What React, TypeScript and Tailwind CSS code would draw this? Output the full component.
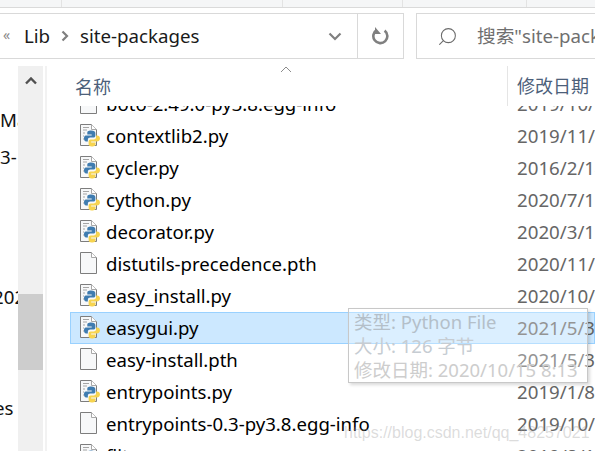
import { Search } from "lucide-react";

const FONT = "font-['Noto_Sans','Noto_Sans_CJK_SC',sans-serif]";

const FILES = [
  { name: "boto-2.49.0-py3.8.egg-info", date: "2019/10/15", py: false },
  { name: "contextlib2.py", date: "2019/11/15", py: true },
  { name: "cycler.py", date: "2016/2/14", py: true },
  { name: "cython.py", date: "2020/7/15", py: true },
  { name: "decorator.py", date: "2020/3/15", py: true },
  { name: "distutils-precedence.pth", date: "2020/11/15", py: false },
  { name: "easy_install.py", date: "2020/10/15", py: true },
  { name: "easygui.py", date: "2021/5/30", py: true, selected: true },
  { name: "easy-install.pth", date: "2021/5/30", py: false },
  { name: "entrypoints.py", date: "2019/1/8", py: true },
  { name: "entrypoints-0.3-py3.8.egg-info", date: "2019/10/15", py: false },
  { name: "flit_core", date: "2019/8/15", py: true },
];

function FileIcon({ py }: { py: boolean }) {
  return (
    <svg width="21" height="23" viewBox="0 0 21 23" className="shrink-0">
      <path d="M0.5 0.5H11.5L16.5 5.5V21.5H0.5Z" fill="#f7f8f9" stroke="#7d7d7d" />
      <path d="M11.5 0.5V5.5H16.5" fill="#fff" stroke="#a8a8a8" />
      {py && (
        <>
          <path d="M3 3.5H9M3 6H7M3 9H5M3 12H4M3 15H4" stroke="#a5a5a5" />
          <g transform="translate(-0.4 0) scale(1.1 1)">
            <path d="M10.5 6.5C7.5 6.5 7 7.6 7 9V10.5H11V11.5H5.8C4.3 11.5 4 13 4 14.5C4 16 4.5 17.5 6 17.5H7.5V15.7C7.5 14.4 8.5 13.6 9.7 13.6H12.5C13.6 13.6 14.3 12.8 14.3 11.7V9C14.3 7.6 13 6.5 10.5 6.5Z" fill="#3f7cb0" />
            <path d="M11 22.5C14 22.5 14.5 21.4 14.5 20V18.5H10.5V17.5H15.7C17.2 17.5 18.5 16.5 18.5 14.5C18.5 12.5 17.5 11.5 16 11.5H15V13.3C15 14.6 14 15.4 12.8 15.4H10C8.9 15.4 8.2 16.2 8.2 17.3V20C8.2 21.4 9 22.5 11 22.5Z" fill="#f7d44f" />
          </g>
        </>
      )}
    </svg>
  );
}

export default function App() {
  return (
    <div className={`relative w-[595px] h-[451px] overflow-hidden bg-white flex flex-col ${FONT}`}>
      {/* toolbar strip cut off by the crop */}
      <div className="h-[8px] shrink-0 bg-[#f5f6f7] border-b border-[#dadada] flex">
        <div className="w-[62px] border-r border-[#e3e3e3]" />
        <div className="w-[221px] border-r border-[#e3e3e3]" />
        <div className="w-[120px] border-r border-[#e3e3e3]" />
        <div className="w-[124px] border-r border-[#e3e3e3]" />
      </div>

      {/* address bar */}
      <div className="mt-[5px] h-[46px] shrink-0 flex">
        <div className="w-[404px] shrink-0 border-y border-r border-[#d9d9d9] flex items-center">
          <span className="ml-[3px] w-[21px] text-[14px] leading-none text-[#8a8a8a] -mt-[3px]">«</span>
          <span className="w-[37px] text-[18.7px] text-[#1a1a1a]">Lib</span>
          <svg width="8" height="12" viewBox="0 0 8 12" className="shrink-0">
            <path d="M1.5 1.5L6 6L1.5 10.5" fill="none" stroke="#7f7f7f" strokeWidth="2.2" />
          </svg>
          <span className="ml-[11px] w-[248px] shrink-0 text-[18.7px] whitespace-nowrap text-[#1a1a1a]">site-packages</span>
          <svg width="14" height="9" viewBox="0 0 14 9" className="shrink-0">
            <path d="M1.5 1.5L7 7L12.5 1.5" fill="none" stroke="#808080" strokeWidth="2.2" />
          </svg>
          <div className="ml-[15px] w-px h-full shrink-0 bg-[#d9d9d9]" />
          <svg width="18" height="18" viewBox="0 0 18 18" className="ml-[14px] shrink-0">
            <path d="M12.6 3.6A7 7 0 1 1 5 3" fill="none" stroke="#808080" strokeWidth="2.6" />
            <path d="M4 0V7H10" fill="#808080" transform="translate(-1 0)" />
          </svg>
        </div>
        <div className="ml-[12px] flex-1 min-w-0 border-y border-l border-[#d9d9d9] flex items-center overflow-hidden">
          <Search size={21} strokeWidth={1.2} className="ml-[20px] shrink-0 text-[#6b6b6b] -scale-x-100" />
          <span className="ml-[19px] text-[18.7px] whitespace-nowrap text-[#6f6f6f]">搜索"site-packages"</span>
        </div>
      </div>

      <div className="mt-[7px] flex-1 flex min-h-0">
        {/* navigation pane, mostly cut off */}
        <div className="w-[18px] shrink-0 overflow-hidden text-[18.7px] leading-[24px] text-[#111] whitespace-nowrap">
          <div className="mt-[42px]">Ma</div>
          <div className="mt-[13px]">3-</div>
          <div className="mt-[116px] -ml-[7px]">202</div>
          <div className="mt-[87px] -ml-[6px]">es</div>
        </div>
        <div className="w-[25px] shrink-0 bg-[#f0f0f0] flex flex-col items-center">
          <svg width="12" height="8" viewBox="0 0 12 8" className="mt-[11px]">
            <path d="M1 6.5L6 1.5L11 6.5" fill="none" stroke="#505050" strokeWidth="2.4" />
          </svg>
          <div className="mt-[209px] w-full h-[76px] bg-[#cdcdcd]" />
        </div>
        <div className="w-[2px] shrink-0 ml-[2px] bg-[#f2f2f2]" />

        {/* file list */}
        <div className="flex-1 min-w-0 flex flex-col pl-[23px]">
          <div className="relative h-[40px] shrink-0 flex">
            <span className="absolute left-[210px] top-0 text-[#7a7a7a]">
              <svg width="12" height="7" viewBox="0 0 12 7">
                <path d="M1 6L6 1L11 6" fill="none" stroke="#8c8c8c" />
              </svg>
            </span>
            <div className="w-[437px] shrink-0 pl-[5px] pt-[8px] text-[18px] text-[#4c607a]">名称</div>
            <div className="border-l border-[#e5e5e5] pl-[9px] pt-[7px] text-[18px] whitespace-nowrap text-[#4c607a]">修改日期</div>
          </div>
          <div className="flex-1 overflow-hidden">
            <div className="-mt-[18px]">
              {FILES.map((f) => (
                <div
                  key={f.name}
                  className={`h-[32px] flex items-center border ${
                    f.selected ? "bg-[#cce8ff] border-[#99d1ff]" : "border-transparent"
                  }`}
                >
                  <div className="w-[446px] shrink-0 flex items-center pl-[9px] text-[18.6px] text-black whitespace-nowrap">
                    <FileIcon py={f.py} />
                    <span className="ml-[5px]">{f.name}</span>
                  </div>
                  <span className="text-[18.7px] text-[#666] whitespace-nowrap">{f.date}</span>
                </div>
              ))}
            </div>
          </div>
        </div>
      </div>

      {/* tooltip fading in over the list */}
      <div className="absolute left-[348px] top-[308px] w-[240px] h-[75px] bg-white/30 border border-[#c8c8c8] shadow-[2px_2px_3px_rgba(0,0,0,0.15)] pl-[5px] pt-[1px] text-[18.5px] leading-[24px] text-[#cdcdcd] whitespace-nowrap">
        <div className="text-[#b4bfc9]">类型: Python File</div>
        <div className="text-[#c6ccd2]">大小: 126 字节</div>
        <div>修改日期: 2020/10/15 8:13</div>
      </div>

      {/* image watermark */}
      <div className="absolute left-[344px] top-[424px] font-['Liberation_Sans',sans-serif] text-[16px] leading-[18px] text-[#9a9a9a]/35 whitespace-nowrap">
        https://blog.csdn.net/qq_48257021
      </div>
    </div>
  );
}
